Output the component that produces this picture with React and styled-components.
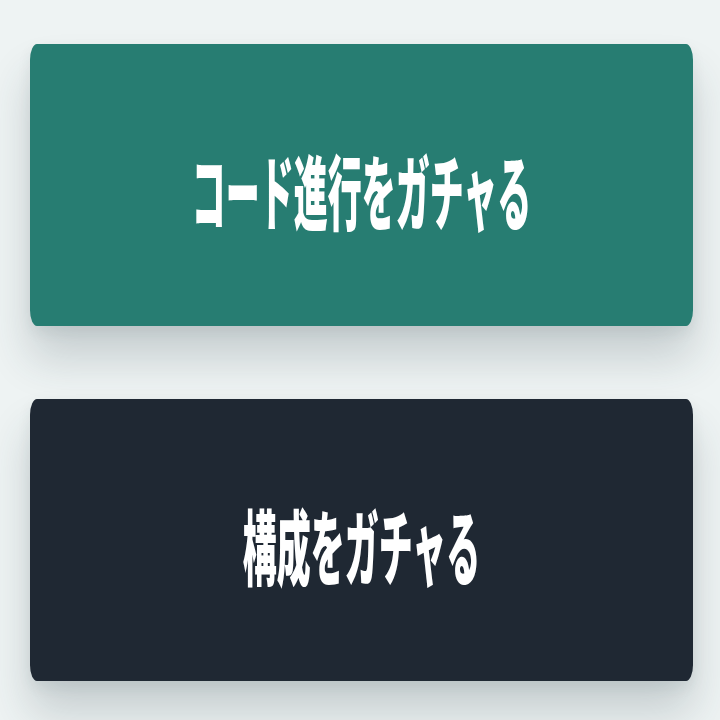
import React from "react";
import styled, { createGlobalStyle } from "styled-components";

const GlobalStyle = createGlobalStyle`
  html, body {
    margin: 0;
    padding: 0;
    background: #eef3f3;
  }
  body {
    font-family: "Noto Sans CJK JP", "Noto Sans", sans-serif;
  }
`;

const Page = styled.div`
  width: 720px;
  height: 720px;
  box-sizing: border-box;
  padding: 44px 27px 0 30px;
  display: flex;
  flex-direction: column;
  gap: 73px;
  background: #eef3f3;
  overflow: hidden;
`;

const GachaButton = styled.button`
  height: 282px;
  width: 100%;
  border: none;
  border-radius: 7px / 16px;
  background: ${(p) => p.$bg};
  box-shadow: 0 32px 44px rgba(40, 60, 70, 0.2), 0 6px 14px rgba(40, 60, 70, 0.08);
  display: flex;
  align-items: center;
  justify-content: center;
  padding: 10px 0 0;
  cursor: pointer;
`;

const Label = styled.span`
  display: inline-block;
  color: #ffffff;
  font-family: "Noto Sans CJK JP", "Noto Sans", sans-serif;
  font-weight: 900;
  font-size: 34px;
  line-height: 1;
  letter-spacing: 0;
  transform: scaleY(2.4);
`;

export default function App() {
  return (
    <>
      <GlobalStyle />
      <Page>
        <GachaButton $bg="#277d72">
          <Label>コード進行をガチャる</Label>
        </GachaButton>
        <GachaButton $bg="#1f2833">
          <Label>構成をガチャる</Label>
        </GachaButton>
      </Page>
    </>
  );
}
